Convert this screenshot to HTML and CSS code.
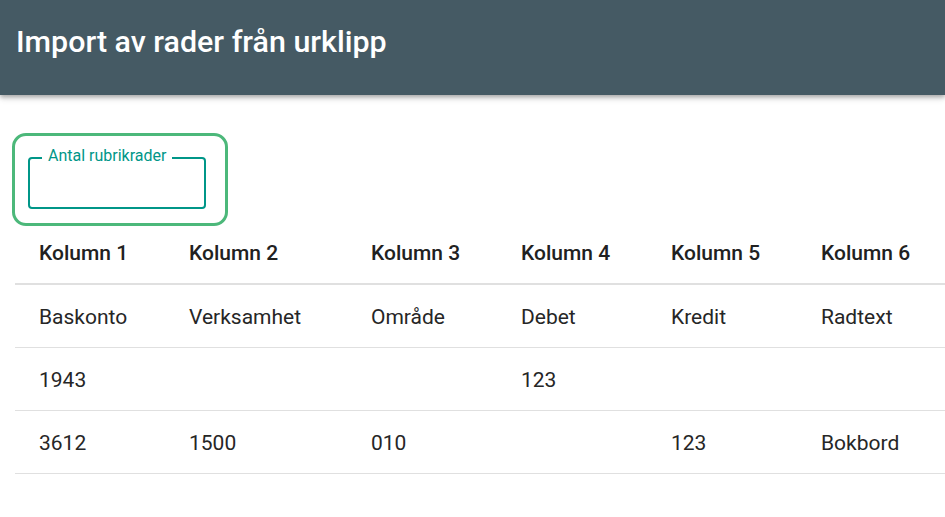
FILE: index.html
```html
<!DOCTYPE html>
<html lang="sv">
<head>
<meta charset="utf-8">
<link rel="stylesheet" href="styles.css">
</head>
<body>
<header class="topbar"><h1 class="title">Import av rader från urklipp</h1></header>
<main class="content">
  <div class="focus-ring">
    <fieldset class="field">
      <legend class="field-label">Antal rubrikrader</legend>
    </fieldset>
  </div>
  <table class="grid">
    <thead>
      <tr><th class="c1">Kolumn 1</th><th class="c2">Kolumn 2</th><th class="c3">Kolumn 3</th><th class="c4">Kolumn 4</th><th class="c5">Kolumn 5</th><th class="c6">Kolumn 6</th></tr>
    </thead>
    <tbody>
      <tr><td>Baskonto</td><td>Verksamhet</td><td>Område</td><td>Debet</td><td>Kredit</td><td>Radtext</td></tr>
      <tr><td>1943</td><td></td><td></td><td>123</td><td></td><td></td></tr>
      <tr><td>3612</td><td>1500</td><td>010</td><td></td><td>123</td><td>Bokbord</td></tr>
    </tbody>
  </table>
</main>
</body>
</html>
```
FILE: styles.css
```css
html, body { margin: 0; padding: 0; background: #fff; overflow: hidden; }
body { font-family: Roboto, "Noto Sans", sans-serif; color: #212121; width: 945px; height: 517px; }
.topbar {
  height: 95px; background: #455a64; display: flex; align-items: center;
  padding: 0 16px; box-sizing: border-box;
  box-shadow: 0 2px 4px rgba(0,0,0,0.25), 0 4px 6px rgba(0,0,0,0.12);
  position: relative; z-index: 1;
}
.title { margin: 0; margin-top: -13px; font-size: 30.4px; font-weight: 500; color: #fff; letter-spacing: 0; }
.content { padding: 38px 0 0 15px; }
.focus-ring {
  margin-left: -3px; width: 216px; height: 93px; box-sizing: border-box;
  border: 3px solid #4cb87a; border-radius: 14px;
  display: flex; align-items: flex-start; padding: 12px 0 0 13px;
}
.field {
  margin: 0; width: 178px; height: 61px; box-sizing: border-box;
  border: 2px solid #009688; border-radius: 4px; padding: 0 0 0 12px;
}
.field-label { color: #009688; font-size: 16px; padding: 0 6px 4px; line-height: 16px; }
.grid { border-collapse: collapse; margin-top: 0; table-layout: fixed; width: 930px; }
.grid th, .grid td { text-align: left; padding: 0 0 0 24px; white-space: nowrap; overflow: hidden; }
.grid th { font-size: 21px; font-weight: 500; height: 53px; padding-bottom: 4px; border-bottom: 2px solid #e0e0e0; color: #212121; }
.grid td { font-size: 21px; font-weight: 400; height: 60px; padding-top: 2px; border-bottom: 1px solid #e0e0e0; color: #262626; }
.c1 { width: 126px; } .c2 { width: 158px; } .c3 { width: 126px; } .c4 { width: 126px; } .c5 { width: 126px; } .c6 { width: 124px; }
```
